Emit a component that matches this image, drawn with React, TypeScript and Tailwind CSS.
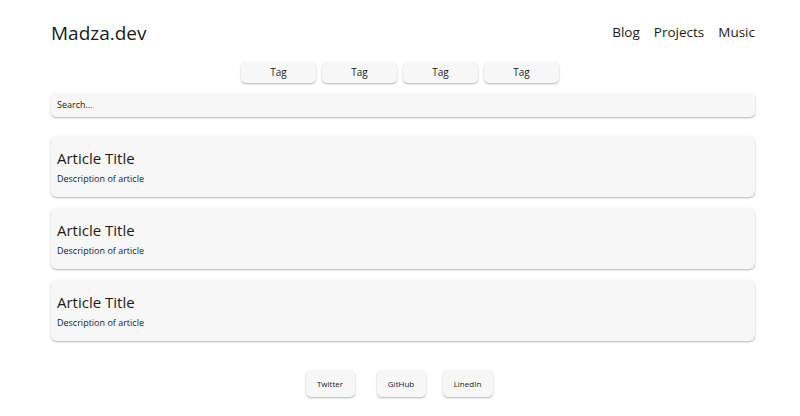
const tags = ["Tag", "Tag", "Tag", "Tag"];
const articles = [1, 2, 3].map(() => ({
  title: "Article Title",
  description: "Description of article",
}));

export default function App() {
  return (
    <div
      className="min-h-[416px] bg-white text-[#1a1a1a]"
      style={{ fontFamily: '"Open Sans", "Noto Sans", sans-serif' }}
    >
      <div className="ml-[51px] w-[704px]">
        {/* header */}
        <header className="flex items-start justify-between pt-[20px]">
          <h1 className="text-[19px] leading-[26px] font-normal">Madza.dev</h1>
          <nav className="flex gap-[14px] pt-[2px] text-[13.5px] leading-[20px]">
            <a>Blog</a>
            <a>Projects</a>
            <a>Music</a>
          </nav>
        </header>

        {/* tags */}
        <div className="mt-[16px] flex justify-center gap-[6px] pr-[6px]">
          {tags.map((t, i) => (
            <button
              key={i}
              className="h-[21px] w-[75px] rounded-[5px] bg-[#f7f7f7] text-[10px] shadow-[0_1px_2px_rgba(0,0,0,0.3)]"
            >
              {t}
            </button>
          ))}
        </div>

        {/* search */}
        <div className="mt-[10px] flex h-[24px] items-center rounded-[5px] bg-[#f7f7f7] px-[6px] text-[9px] shadow-[0_1px_2px_rgba(0,0,0,0.3)]">
          Search...
        </div>

        {/* articles */}
        <div className="mt-[19px] flex flex-col gap-[11px]">
          {articles.map((a, i) => (
            <div
              key={i}
              className="h-[61px] rounded-[6px] bg-[#f7f7f7] px-[6px] pt-[12px] shadow-[0_1px_2px_rgba(0,0,0,0.3)]"
            >
              <h2 className="text-[15px] leading-[20px]">{a.title}</h2>
              <p className="mt-[4px] text-[9px] leading-[14px]">{a.description}</p>
            </div>
          ))}
        </div>

        {/* footer */}
        <footer className="mt-[29px] flex justify-center pr-[8px]">
          <button className="h-[27px] w-[49px] rounded-[5px] bg-[#f7f7f7] text-[8px] shadow-[0_1px_2px_rgba(0,0,0,0.3)]">
            Twitter
          </button>
          <button className="ml-[22px] h-[27px] w-[49px] rounded-[5px] bg-[#f7f7f7] text-[8px] shadow-[0_1px_2px_rgba(0,0,0,0.3)]">
            GitHub
          </button>
          <button className="ml-[17px] h-[27px] w-[50px] rounded-[5px] bg-[#f7f7f7] text-[8px] shadow-[0_1px_2px_rgba(0,0,0,0.3)]">
            LinedIn
          </button>
        </footer>
      </div>
    </div>
  );
}
